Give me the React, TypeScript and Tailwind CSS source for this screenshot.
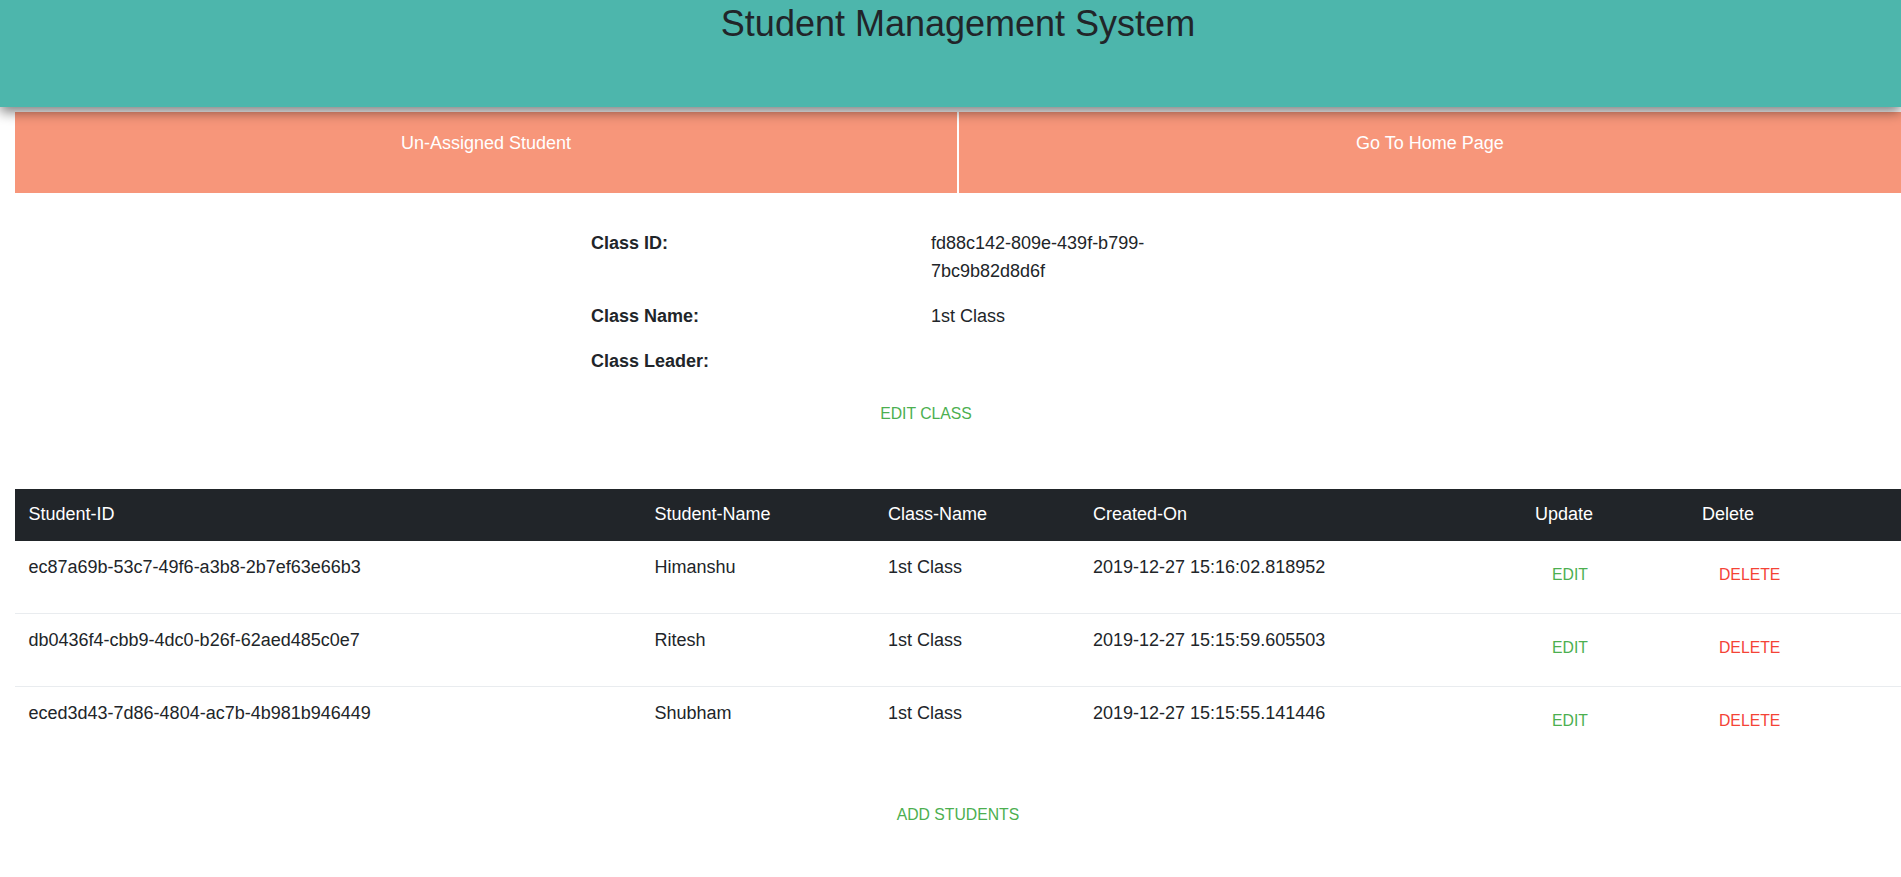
import React from "react";

const students = [
  { id: "ec87a69b-53c7-49f6-a3b8-2b7ef63e66b3", name: "Himanshu", cls: "1st Class", created: "2019-12-27 15:16:02.818952" },
  { id: "db0436f4-cbb9-4dc0-b26f-62aed485c0e7", name: "Ritesh", cls: "1st Class", created: "2019-12-27 15:15:59.605503" },
  { id: "eced3d43-7d86-4804-ac7b-4b981b946449", name: "Shubham", cls: "1st Class", created: "2019-12-27 15:15:55.141446" },
];

const cols = "grid grid-cols-[626px_233.5px_205px_442px_167px_212.5px]";

export default function App() {
  return (
    <div
      className="min-h-[877px] bg-white text-[#212529] text-[18px]"
      style={{ fontFamily: '"Liberation Sans", Arial, Helvetica, sans-serif' }}
    >
      <header className="relative z-10 h-[107px] bg-[#4db6ac] pl-[15px] shadow-[0_5px_12px_rgba(0,0,0,0.5)]">
        <h1 className="pt-[2px] text-center text-[36px] leading-[43px] font-normal text-[#212529]">
          Student Management System
        </h1>
      </header>

      <nav className="ml-[15px] mt-[5px] flex gap-[2px]">
        <a className="flex-1 h-[81px] bg-[#f7967a] pt-[18px] text-center text-[18px] leading-[27px] text-white cursor-pointer">
          Un-Assigned Student
        </a>
        <a className="flex-1 h-[81px] bg-[#f7967a] pt-[18px] text-center text-[18px] leading-[27px] text-white cursor-pointer">
          Go To Home Page
        </a>
      </nav>

      <section className="ml-[576px] mt-[36px] w-[700px]">
        <div className="grid grid-cols-[355px_260px] gap-y-[17px] leading-[28px]">
          <div className="pl-[15px] font-bold">Class ID:</div>
          <div>fd88c142-809e-439f-b799-7bc9b82d8d6f</div>
          <div className="pl-[15px] font-bold">Class Name:</div>
          <div>1st Class</div>
          <div className="pl-[15px] font-bold">Class Leader:</div>
          <div></div>
        </div>
        <div className="mt-[19px] flex justify-center">
          <button className="h-[40px] px-[17px] text-[15.75px] leading-[40px] uppercase text-[#4caf50]">
            Edit Class
          </button>
        </div>
      </section>

      <div className="ml-[15px] mt-[55px]">
        <div className={`${cols} h-[52px] bg-[#212529] text-white`}>
          {["Student-ID", "Student-Name", "Class-Name", "Created-On", "Update", "Delete"].map((h) => (
            <div key={h} className="px-[13.5px] pt-[12px] leading-[27px]">
              {h}
            </div>
          ))}
        </div>
        {students.map((s, i) => (
          <div
            key={s.id}
            className={`${cols} ${i === 0 ? "h-[72px]" : "h-[73px] border-t border-[#e9ecef]"}`}
          >
            <div className="px-[13.5px] pt-[13px] leading-[27px]">{s.id}</div>
            <div className="px-[13.5px] pt-[13px] leading-[27px]">{s.name}</div>
            <div className="px-[13.5px] pt-[13px] leading-[27px]">{s.cls}</div>
            <div className="px-[13.5px] pt-[13px] leading-[27px]">{s.created}</div>
            <div className="px-[13.5px] pt-[14px]">
              <button className="h-[40px] px-[17px] text-[15.75px] leading-[40px] uppercase text-[#4caf50]">
                Edit
              </button>
            </div>
            <div className="px-[13.5px] pt-[14px]">
              <button className="h-[40px] px-[17px] text-[15.75px] leading-[40px] uppercase text-[#f44336]">
                Delete
              </button>
            </div>
          </div>
        ))}
      </div>

      <div className="ml-[15px] mt-[36px] flex justify-center">
        <button className="h-[40px] px-[17px] text-[15.75px] leading-[40px] uppercase text-[#4caf50]">
          Add Students
        </button>
      </div>
    </div>
  );
}
